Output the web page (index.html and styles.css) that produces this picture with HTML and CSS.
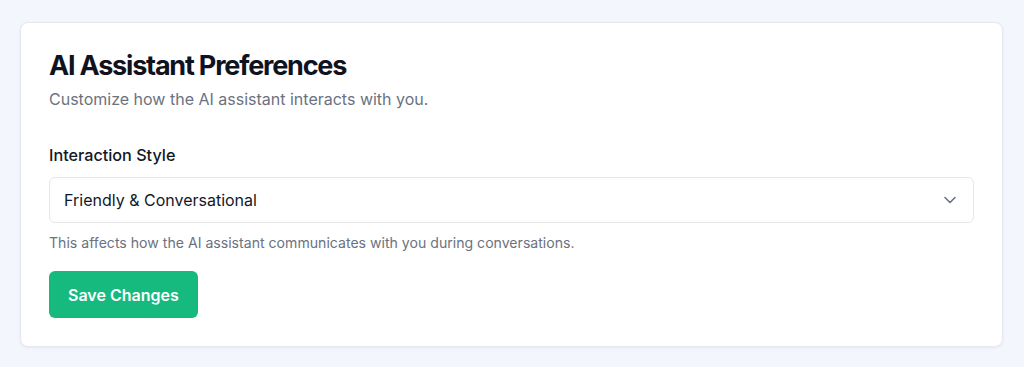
FILE: index.html
```html
<!DOCTYPE html>
<html lang="en">
<head>
    <meta charset="UTF-8">
    <meta name="viewport" content="width=device-width, initial-scale=1.0">
    <title>AI Assistant Preferences</title>
    <link rel="stylesheet" href="styles.css">
</head>
<body>
    <div class="card">
        <div class="card-header">
            <h1 class="card-title">AI Assistant Preferences</h1>
            <p class="card-subtitle">Customize how the AI assistant interacts with you.</p>
        </div>

        <div class="field">
            <label class="field-label">Interaction Style</label>
            <div class="select">
                <span class="select-value">Friendly &amp; Conversational</span>
                <svg class="select-chevron" width="12" height="8" viewBox="0 0 12 8">
                    <path d="M1 1.5 L6 6.5 L11 1.5" fill="none" stroke="#6b7280" stroke-width="1.6" stroke-linecap="round" stroke-linejoin="round"/>
                </svg>
            </div>
            <p class="field-help">This affects how the AI assistant communicates with you during conversations.</p>
        </div>

        <button class="btn-save">Save Changes</button>
    </div>
</body>
</html>
```

FILE: styles.css
```css
body {
    margin: 0;
    padding: 22px 21px 21px 20px;
    background: #f3f6fc;
    font-family: 'Inter', sans-serif;
    color: #111827;
}

.card {
    background: white;
    border: 1px solid #e6e8ee;
    border-radius: 8px;
    box-shadow: 0 1px 3px rgba(15, 23, 42, 0.06);
    padding: 28px 28px 28px 28px;
}

.card-header {
    margin-bottom: 32px;
}

.card-title {
    margin: 0;
    font-size: 27px;
    line-height: 30px;
    font-weight: 700;
    letter-spacing: -1.2px;
    color: #0f1320;
}

.card-subtitle {
    margin: 6px 0 0;
    font-size: 16px;
    line-height: 24px;
    color: #6b7280;
}

.field {
    margin-bottom: 18px;
}

.field-label {
    display: block;
    font-size: 16.2px;
    line-height: 24px;
    font-weight: 500;
    color: #111827;
    margin-bottom: 10px;
}

.select {
    display: flex;
    align-items: center;
    justify-content: space-between;
    height: 44px;
    padding: 0 17px 0 14px;
    border: 1px solid #e5e7eb;
    border-radius: 6px;
    background: white;
}

.select-value {
    font-size: 16px;
    color: #111827;
}

.select-chevron {
    display: block;
}

.field-help {
    margin: 10px 0 0;
    font-size: 14.1px;
    line-height: 20px;
    color: #6b7280;
}

.btn-save {
    height: 47px;
    padding: 0 19px;
    background: #16b97e;
    border: none;
    border-radius: 6px;
    color: white;
    font-family: 'Inter', sans-serif;
    font-size: 16px;
    font-weight: 600;
    cursor: pointer;
}
```
